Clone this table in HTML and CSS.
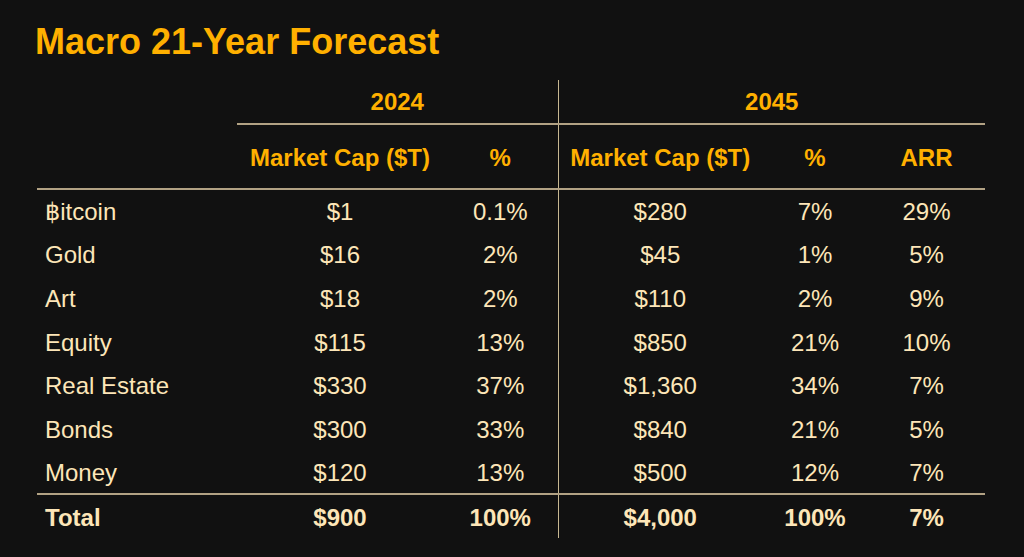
FILE: index.html
```html
<!DOCTYPE html>
<html lang="en">
<head>
<meta charset="utf-8">
<title>Macro 21-Year Forecast</title>
<link rel="stylesheet" href="styles.css">
</head>
<body>
<div class="slide">
  <h1 class="title">Macro 21-Year Forecast</h1>
  <table class="forecast">
    <colgroup>
      <col class="c-label"><col class="c-cap1"><col class="c-pct1"><col class="c-cap2"><col class="c-pct2"><col class="c-arr">
    </colgroup>
    <thead>
      <tr class="year-row">
        <th class="blank"></th>
        <th class="year" colspan="2">2024</th>
        <th class="year split" colspan="3">2045</th>
      </tr>
      <tr class="sub-row">
        <th class="blank"></th>
        <th>Market Cap ($T)</th>
        <th>%</th>
        <th class="split">Market Cap ($T)</th>
        <th>%</th>
        <th>ARR</th>
      </tr>
    </thead>
    <tbody>
      <tr><td class="label">฿itcoin</td><td>$1</td><td>0.1%</td><td class="split">$280</td><td>7%</td><td>29%</td></tr>
      <tr><td class="label">Gold</td><td>$16</td><td>2%</td><td class="split">$45</td><td>1%</td><td>5%</td></tr>
      <tr><td class="label">Art</td><td>$18</td><td>2%</td><td class="split">$110</td><td>2%</td><td>9%</td></tr>
      <tr><td class="label">Equity</td><td>$115</td><td>13%</td><td class="split">$850</td><td>21%</td><td>10%</td></tr>
      <tr><td class="label">Real Estate</td><td>$330</td><td>37%</td><td class="split">$1,360</td><td>34%</td><td>7%</td></tr>
      <tr><td class="label">Bonds</td><td>$300</td><td>33%</td><td class="split">$840</td><td>21%</td><td>5%</td></tr>
      <tr class="last"><td class="label">Money</td><td>$120</td><td>13%</td><td class="split">$500</td><td>12%</td><td>7%</td></tr>
    </tbody>
    <tfoot>
      <tr class="total"><td class="label">Total</td><td>$900</td><td>100%</td><td class="split">$4,000</td><td>100%</td><td>7%</td></tr>
    </tfoot>
  </table>
</div>
</body>
</html>
```

FILE: styles.css
```css
html, body {
  margin: 0;
  padding: 0;
  background: #111111;
}

body {
  font-family: "Liberation Sans", Arial, "DejaVu Sans", sans-serif;
  color: #fde6b8;
}

.slide {
  width: 1024px;
  height: 557px;
  padding: 22px 0 0 35px;
  box-sizing: border-box;
}

.title {
  margin: 0;
  font-size: 36px;
  line-height: 40px;
  font-weight: bold;
  color: #ffb000;
}

.forecast {
  margin: 18px 0 0 2px;
  border-collapse: collapse;
  table-layout: fixed;
  width: 948px;
  font-size: 24px;
}

.c-label { width: 200px; }
.c-cap1 { width: 206px; }
.c-pct1 { width: 115px; }
.c-cap2 { width: 204px; }
.c-pct2 { width: 106px; }
.c-arr { width: 117px; }

.forecast th,
.forecast td {
  padding: 0;
  text-align: center;
  vertical-align: middle;
  white-space: nowrap;
}

.forecast th {
  color: #ffb000;
  font-weight: bold;
}

.year-row {
  height: 44px;
}

.year-row .year {
  border-bottom: 2px solid #b2a284;
}

.sub-row {
  height: 65px;
}

.sub-row th {
  padding-top: 3px;
  border-bottom: 2px solid #b2a284;
}

.forecast tbody tr {
  height: 43.6px;
}

.forecast tbody td {
  padding-top: 2px;
}

.forecast tbody tr.last td {
  border-bottom: 2px solid #b2a284;
}

.forecast td.label {
  text-align: left;
  padding-left: 8px;
}

.split {
  border-left: 1px solid #c7b892;
}

.total {
  height: 44px;
}

.total td {
  font-weight: bold;
  padding-top: 2px;
}
```
